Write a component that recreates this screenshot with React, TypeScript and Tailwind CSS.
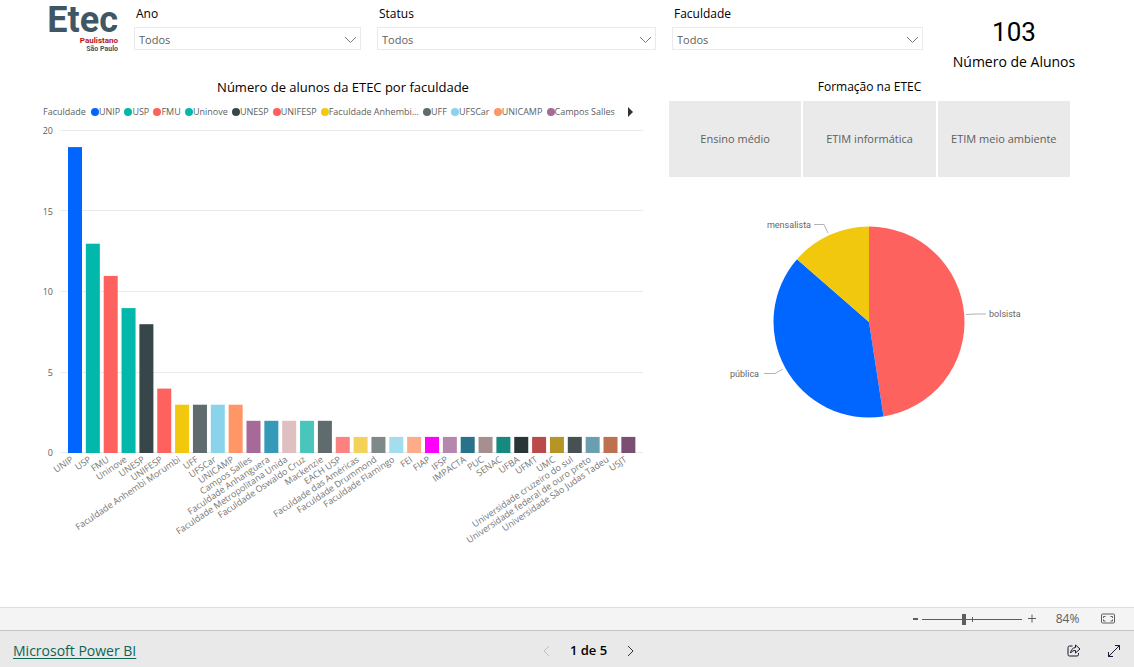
import { useState } from 'react'

type Faculty = { name: string; total: number; color: string }

const FACULTIES: Faculty[] = [
  { name: 'UNIP', total: 19, color: '#0066ff' },
  { name: 'USP', total: 13, color: '#01b8aa' },
  { name: 'FMU', total: 11, color: '#fd625e' },
  { name: 'Uninove', total: 9, color: '#01b8aa' },
  { name: 'UNESP', total: 8, color: '#374649' },
  { name: 'UNIFESP', total: 4, color: '#fd625e' },
  { name: 'Faculdade Anhembi Morumbi', total: 3, color: '#f2c80f' },
  { name: 'UFF', total: 3, color: '#5f6b6d' },
  { name: 'UFSCar', total: 3, color: '#8ad4eb' },
  { name: 'UNICAMP', total: 3, color: '#fe9666' },
  { name: 'Campos Salles', total: 2, color: '#a66999' },
  { name: 'Faculdade Anhanguera', total: 2, color: '#3599b8' },
  { name: 'Faculdade Metropolitana Unida', total: 2, color: '#dfbfbf' },
  { name: 'Faculdade Oswaldo Cruz', total: 2, color: '#4ac5bb' },
  { name: 'Mackenzie', total: 2, color: '#5f6b6d' },
  { name: 'EACH USP', total: 1, color: '#fb8281' },
  { name: 'Faculdade das Américas', total: 1, color: '#f4d25a' },
  { name: 'Faculdade Drummond', total: 1, color: '#7f898a' },
  { name: 'Faculdade Flamingo', total: 1, color: '#a4ddee' },
  { name: 'FEI', total: 1, color: '#fdab89' },
  { name: 'FIAP', total: 1, color: '#ff00ff' },
  { name: 'IFSP', total: 1, color: '#b687ac' },
  { name: 'IMPACTA', total: 1, color: '#28738a' },
  { name: 'PUC', total: 1, color: '#a78f8f' },
  { name: 'SENAC', total: 1, color: '#168980' },
  { name: 'UFBA', total: 1, color: '#293537' },
  { name: 'UFMT', total: 1, color: '#bb4a4a' },
  { name: 'UMC', total: 1, color: '#b59525' },
  { name: 'Universidade cruzeiro do sul', total: 1, color: '#475052' },
  { name: 'Universidade federal de ouro preto', total: 1, color: '#6a9fb0' },
  { name: 'Universidade São Judas Tadeu', total: 1, color: '#bd7150' },
  { name: 'USJT', total: 1, color: '#7b4f71' },
]

const TRACKS = ['Ensino médio', 'ETIM informática', 'ETIM meio ambiente']

const BASELINE = 334
const UNIT = 16.1

function Logo() {
  return (
    <div className="flex flex-col items-end font-[Roboto,sans-serif] font-bold">
      <span className="text-[36px] leading-[31px] text-[#3f5765]">Etec</span>
      <span className="text-[8px] leading-[9px] text-[#b3141b]">Paulistano</span>
      <span className="text-[7px] leading-[8px] text-[#3f5765]">São Paulo</span>
    </div>
  )
}

function Filter({ id, label }: { id: string; label: string }) {
  return (
    <div className="flex min-w-0 flex-col">
      <label htmlFor={id} className="pl-[2px] text-[12px] leading-[18px] text-black">
        {label}
      </label>
      <div className="relative mt-1">
        <select
          id={id}
          className="block h-[23px] w-full appearance-none rounded-none border border-[#eaeaea] bg-white pt-[3px] pl-1 text-[11px] text-[#605e5c] outline-none"
        >
          <option>Todos</option>
        </select>
        <svg
          className="pointer-events-none absolute top-[9px] right-1"
          width="13"
          height="8"
          viewBox="0 0 13 8"
          fill="none"
          stroke="#7b7977"
        >
          <path d="M1 1l5.500 5.500L12 1" />
        </svg>
      </div>
    </div>
  )
}

function Legend() {
  return (
    <div className="flex items-center text-[9px] leading-[14px] text-[#605e5c]">
      <div className="flex min-w-0 flex-1 items-center justify-between whitespace-nowrap">
        <span className="pr-px">Faculdade</span>
        {FACULTIES.slice(0, 11).map((f) => (
          <span key={f.name} className="flex items-center">
            <span className="h-2 w-2 rounded-full" style={{ backgroundColor: f.color }} />
            {f.name.length > 20 ? 'Faculdade Anhembi...' : f.name}
          </span>
        ))}
      </div>
      <button type="button" aria-label="Próximo" className="mr-2 ml-3">
        <svg width="8" height="10" viewBox="0 0 8 10">
          <path d="M1 0l5 5-5 5z" fill="#333" />
        </svg>
      </button>
    </div>
  )
}

function BarChart() {
  return (
    <svg viewBox="0 0 600 440" className="block w-full" role="img" aria-label="Alunos por faculdade">
      {[0, 5, 10, 15, 20].map((v) => (
        <g key={v}>
          <path d={`M17 ${Math.round(BASELINE - v * UNIT) - 0.5}H600`} stroke="#ebebeb" />
          <text x="10" y={BASELINE - v * UNIT + 3} textAnchor="end" fontSize="9" fill="#605e5c">
            {v}
          </text>
        </g>
      ))}
      {FACULTIES.map((f, i) => {
        const x = 25 + i * 17.85
        const h = f.total * UNIT
        return (
          <g key={f.name}>
            <rect x={x} y={BASELINE - h} width="14" height={h} fill={f.color} />
            <text
              transform={`translate(${x + 6} ${BASELINE + 8}) rotate(-34)`}
              textAnchor="end"
              fontSize="9"
              fill="#777"
            >
              {f.name}
            </text>
          </g>
        )
      })}
    </svg>
  )
}

const SLICES = [
  { name: 'bolsista', total: 49, color: '#fd625e' },
  { name: 'pública', total: 40, color: '#0066ff' },
  { name: 'mensalista', total: 14, color: '#f2c80f' },
]

function PieChart() {
  const sum = SLICES.reduce((acc, s) => acc + s.total, 0)
  const r = 95.5
  const point = (n: number) => {
    const a = (n / sum) * Math.PI * 2
    return `${200 + r * Math.sin(a)} ${115 - r * Math.cos(a)}`
  }
  let start = 0

  return (
    <svg
      viewBox="0 0 401 230"
      className="block w-full font-[Roboto,sans-serif]"
      role="img"
      aria-label="Alunos por tipo de bolsa"
    >
      {SLICES.map((s) => {
        const from = start
        start += s.total
        return (
          <path
            key={s.name}
            d={`M200 115L${point(from)}A${r} ${r} 0 0 1 ${point(start)}Z`}
            fill={s.color}
          />
        )
      })}
      <g fill="none" stroke="#b3b3b3">
        <path d="M297 107.500L307 107H317" />
        <path d="M145 17.500H155L159 26" />
        <path d="M95 166.500H106L114 162" />
      </g>
      <g fontSize="9" fill="#666">
        <text x="320" y="110">bolsista</text>
        <text x="142" y="21" textAnchor="end">mensalista</text>
        <text x="90" y="170" textAnchor="end">pública</text>
      </g>
    </svg>
  )
}

function ZoomBar() {
  const [zoom, setZoom] = useState(84)

  return (
    <div className="flex h-[23px] items-center justify-end border-t border-[#dedede] bg-[#f4f4f4] pr-[19px] text-[#605e5c]">
      <button type="button" aria-label="Reduzir" onClick={() => setZoom((z) => z - 10)} className="p-1">
        <svg width="5" height="12" viewBox="0 0 5 12">
          <path d="M0 6h5" stroke="currentColor" strokeWidth="2" />
        </svg>
      </button>
      <div className="relative flex items-center">
        <input
          type="range"
          aria-label="Zoom"
          min={0}
          max={200}
          value={zoom}
          onChange={(e) => setZoom(Number(e.target.value))}
          className="h-3 w-[100px] appearance-none bg-transparent [&::-webkit-slider-runnable-track]:h-px [&::-webkit-slider-runnable-track]:bg-[#605e5c] [&::-webkit-slider-thumb]:-mt-[5px] [&::-webkit-slider-thumb]:h-[11px] [&::-webkit-slider-thumb]:w-1 [&::-webkit-slider-thumb]:appearance-none [&::-webkit-slider-thumb]:bg-[#605e5c]"
        />
        <span className="pointer-events-none absolute left-1/2 h-[5px] w-px bg-[#605e5c]" />
      </div>
      <button type="button" aria-label="Ampliar" onClick={() => setZoom((z) => z + 10)} className="ml-1 p-[2px]">
        <svg width="8" height="12" viewBox="0 0 8 12" stroke="currentColor">
          <path d="M0 5.500h8M4 1.500v8" />
        </svg>
      </button>
      <span className="w-[51px] pl-2 text-center text-[12px]">{zoom}%</span>
      <button type="button" aria-label="Ajustar à página" className="ml-3">
        <svg width="14" height="12" viewBox="0 0 14 12" fill="none" stroke="currentColor">
          <rect x="0.5" y="1" width="13" height="9" rx="1" />
          <path d="M2.500 5V3.500H4.500M9.500 3.500h2V5M11.500 6.500V8H9.500M4.500 8h-2V6.500" />
        </svg>
      </button>
    </div>
  )
}

function Footer() {
  return (
    <footer className="grid h-[37px] grid-cols-3 items-center border-t border-[#c4c4c4] bg-[#e9e9e9] px-[13px] pt-[3px]">
      <a href="#" className="justify-self-start text-[14px] text-[#0b6556] underline underline-offset-2">
        Microsoft Power BI
      </a>
      <div className="flex items-center justify-center gap-5 pl-[43px]">
        <button type="button" aria-label="Página anterior" disabled className="text-[#c0c0c0]">
          <svg width="7" height="12" viewBox="0 0 7 12" fill="none" stroke="currentColor">
            <path d="M6 1L1 6l5 5" />
          </svg>
        </button>
        <span className="text-[13px] font-semibold text-black">1 de 5</span>
        <button type="button" aria-label="Próxima página" className="text-[#333]">
          <svg width="7" height="12" viewBox="0 0 7 12" fill="none" stroke="currentColor">
            <path d="M1 1l5 5-5 5" />
          </svg>
        </button>
      </div>
      <div className="flex items-center gap-[26px] justify-self-end text-[#201430]">
        <button type="button" aria-label="Compartilhar">
          <svg width="14" height="14" viewBox="0 0 14 14" fill="none" stroke="currentColor" strokeLinejoin="round">
            <path d="M5.500 2H2.500A1.500 1.500 0 0 0 1 3.500v7A1.500 1.500 0 0 0 2.500 12h7.500a1.500 1.500 0 0 0 1.500-1.500V9" />
            <path d="M8.500 1l4.500 4-4.500 4V6.500C6.500 6.500 5 7 3.500 9 4 6 5.500 3.800 8.500 3.500z" />
          </svg>
        </button>
        <button type="button" aria-label="Tela cheia">
          <svg width="14" height="14" viewBox="0 0 14 14" fill="none" stroke="currentColor">
            <path d="M1.500 12.500l11-11M8 1.500h4.500V6M1.500 8v4.500H6" />
          </svg>
        </button>
      </div>
    </footer>
  )
}

export default function App() {
  return (
    <div className="flex min-h-screen flex-col bg-white font-['Open_Sans','Noto_Sans',sans-serif]">
      <main className="flex-1">
        <header className="grid grid-cols-[70px_227fr_279fr_251fr_150fr] gap-4 pt-[5px] pr-[45px] pl-12">
          <Logo />
          <Filter id="ano" label="Ano" />
          <Filter id="status" label="Status" />
          <Filter id="faculdade" label="Faculdade" />
          <div className="flex flex-col items-center pt-3 whitespace-nowrap text-black">
            <span className="font-[Roboto,sans-serif] text-[26px] leading-[30px]">103</span>
            <span className="text-[14px] leading-[30px]">Número de Alunos</span>
          </div>
        </header>

        <div className="grid grid-cols-[600fr_401fr] gap-[26px] pr-16 pl-[43px]">
          <section>
            <h2 className="text-center text-[13px] leading-5 text-black">
              Número de alunos da ETEC por faculdade
            </h2>
            <div className="mt-2">
              <Legend />
            </div>
            <BarChart />
          </section>

          <section>
            <h2 className="text-center text-[12px] leading-5 text-black">Formação na ETEC</h2>
            <div className="mt-1 grid grid-cols-3 gap-[2px]">
              {TRACKS.map((t) => (
                <button key={t} type="button" className="h-[76px] bg-[#eaeaea] text-[11px] text-[#605e5c]">
                  {t}
                </button>
              ))}
            </div>
            <div className="mt-[30px]">
              <PieChart />
            </div>
          </section>
        </div>
      </main>
      <ZoomBar />
      <Footer />
    </div>
  )
}
